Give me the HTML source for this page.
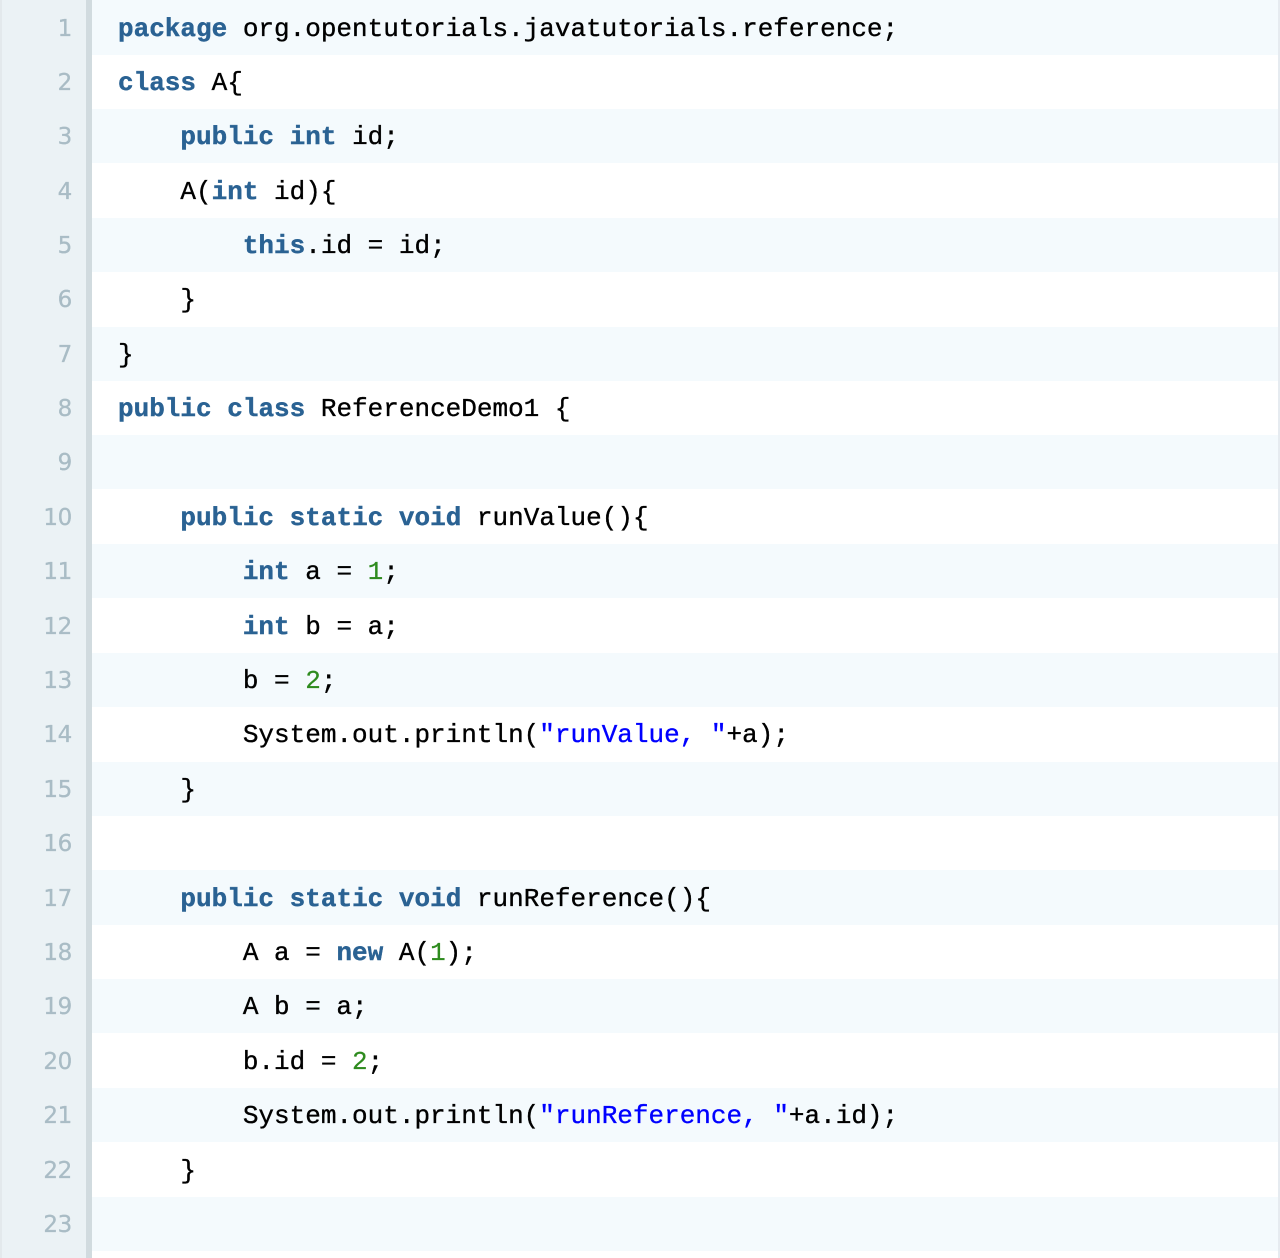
<!DOCTYPE html>
<html>
<head>
<meta charset="utf-8">
<style>
html,body{margin:0;padding:0;background:#fff}
body{width:1280px;height:1258px;position:relative;overflow:hidden}
#g{position:absolute;left:0;top:0;width:84px;height:1258px;background:#ebf2f5;border-left:2px solid #e3e9ec}
#b{position:absolute;left:86px;top:0;width:6px;height:1258px;background:#d1dbdf}
#r{position:absolute;right:0;top:0;width:2px;height:1258px;background:#e6ebf0;z-index:3}
.bg{position:absolute;left:92px;right:0;background:#f4fafd}
.n{position:absolute;left:0;width:72px;text-align:right;font:23px/54px "DejaVu Sans",sans-serif;color:#a9bcc5;letter-spacing:-.3px;height:54px;margin-top:1px;-webkit-text-stroke:.3px #a9bcc5}
.c{position:absolute;left:118px;white-space:pre;font:26px/54px "Liberation Mono",monospace;color:#000;height:54px;margin-top:1px;-webkit-text-stroke:.35px #000}
b{color:#2a6293;font-weight:700;-webkit-text-stroke:.4px #2a6293}
i{font-style:normal;color:#00f;-webkit-text-stroke:.35px #00f}
u{text-decoration:none;color:#2e8b1e;-webkit-text-stroke:.2px #2e8b1e}
</style>
</head>
<body>
<div id="g"></div><div id="b"></div><div id="r"></div>
<div class="bg" style="top:0;height:55px"></div>
<div class="bg" style="top:109px;height:54px"></div>
<div class="bg" style="top:218px;height:54px"></div>
<div class="bg" style="top:327px;height:54px"></div>
<div class="bg" style="top:435px;height:54px"></div>
<div class="bg" style="top:544px;height:54px"></div>
<div class="bg" style="top:653px;height:54px"></div>
<div class="bg" style="top:762px;height:54px"></div>
<div class="bg" style="top:870px;height:55px"></div>
<div class="bg" style="top:979px;height:54px"></div>
<div class="bg" style="top:1088px;height:54px"></div>
<div class="bg" style="top:1197px;height:54px"></div>

<div class="n" style="top:1px">1</div><div class="c" style="top:1px"><b>package</b> org.opentutorials.javatutorials.reference;</div>
<div class="n" style="top:55px">2</div><div class="c" style="top:55px"><b>class</b> A{</div>
<div class="n" style="top:109px">3</div><div class="c" style="top:109px">    <b>public</b> <b>int</b> id;</div>
<div class="n" style="top:164px">4</div><div class="c" style="top:164px">    A(<b>int</b> id){</div>
<div class="n" style="top:218px">5</div><div class="c" style="top:218px">        <b>this</b>.id = id;</div>
<div class="n" style="top:272px">6</div><div class="c" style="top:272px">    }</div>
<div class="n" style="top:327px">7</div><div class="c" style="top:327px">}</div>
<div class="n" style="top:381px">8</div><div class="c" style="top:381px"><b>public</b> <b>class</b> ReferenceDemo1 {</div>
<div class="n" style="top:435px">9</div>
<div class="n" style="top:490px">10</div><div class="c" style="top:490px">    <b>public</b> <b>static</b> <b>void</b> runValue(){</div>
<div class="n" style="top:544px">11</div><div class="c" style="top:544px">        <b>int</b> a = <u>1</u>;</div>
<div class="n" style="top:599px">12</div><div class="c" style="top:599px">        <b>int</b> b = a;</div>
<div class="n" style="top:653px">13</div><div class="c" style="top:653px">        b = <u>2</u>;</div>
<div class="n" style="top:707px">14</div><div class="c" style="top:707px">        System.out.println(<i>"runValue, "</i>+a);</div>
<div class="n" style="top:762px">15</div><div class="c" style="top:762px">    }</div>
<div class="n" style="top:816px">16</div>
<div class="n" style="top:871px">17</div><div class="c" style="top:871px">    <b>public</b> <b>static</b> <b>void</b> runReference(){</div>
<div class="n" style="top:925px">18</div><div class="c" style="top:925px">        A a = <b>new</b> A(<u>1</u>);</div>
<div class="n" style="top:979px">19</div><div class="c" style="top:979px">        A b = a;</div>
<div class="n" style="top:1034px">20</div><div class="c" style="top:1034px">        b.id = <u>2</u>;</div>
<div class="n" style="top:1088px">21</div><div class="c" style="top:1088px">        System.out.println(<i>"runReference, "</i>+a.id);</div>
<div class="n" style="top:1143px">22</div><div class="c" style="top:1143px">    }</div>
<div class="n" style="top:1197px">23</div>
</body>
</html>
